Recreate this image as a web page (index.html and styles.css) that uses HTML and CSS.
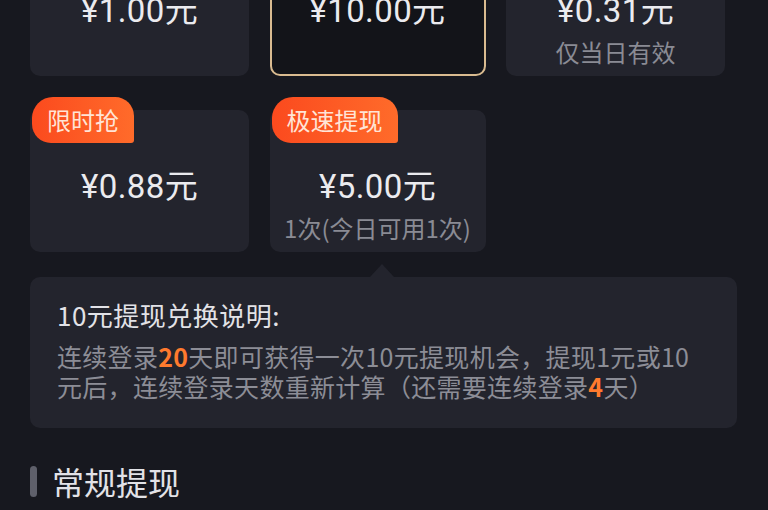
FILE: index.html
```html
<!DOCTYPE html>
<html lang="zh-CN">
<head>
<meta charset="utf-8">
<title>提现</title>
<link rel="stylesheet" href="styles.css">
</head>
<body>
<div class="page">
  <div class="grid">
    <div class="card">
      <div class="amount">¥1.00元</div>
    </div>
    <div class="card selected">
      <div class="amount">¥10.00元</div>
    </div>
    <div class="card">
      <div class="amount">¥0.31元</div>
      <div class="sub">仅当日有效</div>
    </div>
    <div class="card">
      <span class="badge">限时抢</span>
      <div class="amount">¥0.88元</div>
    </div>
    <div class="card">
      <span class="badge">极速提现</span>
      <div class="amount">¥5.00元</div>
      <div class="sub">1次(今日可用1次)</div>
    </div>
  </div>

  <div class="info">
    <span class="pointer"></span>
    <div class="info-title">10元提现兑换说明:</div>
    <p class="info-body">连续登录<b class="hl">20</b>天即可获得一次10元提现机会，提现1元或10元后，连续登录天数重新计算（还需要连续登录<b class="hl">4</b>天）</p>
  </div>

  <h2 class="section-title"><span class="bar"></span>常规提现</h2>
</div>
</body>
</html>
```

FILE: styles.css
```css
html, body {
  margin: 0;
  padding: 0;
  background: #17181f;
}
body {
  font-family: "Noto Sans CJK SC", "Noto Sans", sans-serif;
  color: #e6e6ea;
  overflow: hidden;
  height: 510px;
}
.page {
  padding: 0 31px 0 30px;
}
.grid {
  display: grid;
  grid-template-columns: 219px 216px 219px;
  column-gap: 20.5px;
  row-gap: 34px;
  margin-top: -66px;
}
.card {
  position: relative;
  height: 142px;
  box-sizing: border-box;
  background: #23242d;
  border-radius: 10px;
  padding-top: 57px;
  text-align: center;
}
.card.selected {
  background: #131419;
  border: 2px solid #d9bb90;
  padding-top: 55px;
}
.amount {
  font-family: Roboto, "Noto Sans CJK SC", sans-serif;
  font-size: 33px;
  line-height: 40px;
  color: #ebebef;
  letter-spacing: 0.4px;
}
.sub {
  margin-top: 6px;
  font-size: 24px;
  line-height: 30px;
  color: #8a8b94;
}
.badge {
  position: absolute;
  left: 2px;
  top: -13px;
  height: 46px;
  line-height: 46px;
  padding: 0 15px;
  font-size: 24px;
  color: #ffe4d6;
  background: linear-gradient(90deg, #fb4a1e 0%, #ff6b2a 100%);
  border-radius: 21px 19px 3px 19px;
}
.info {
  position: relative;
  margin-top: 25px;
  width: 707px;
  box-sizing: border-box;
  background: #23242d;
  border-radius: 10px;
  padding: 21px 27px 27px 27px;
}
.pointer {
  position: absolute;
  left: 340px;
  top: -13px;
  width: 0;
  height: 0;
  border-left: 12px solid transparent;
  border-right: 12px solid transparent;
  border-bottom: 13px solid #23242d;
}
.info-title {
  font-size: 26px;
  line-height: 34px;
  letter-spacing: 0.5px;
  color: #e2e2e7;
}
.info-body {
  margin: 9px 0 0 0;
  font-size: 25px;
  letter-spacing: 0.3px;
  line-height: 30px;
  color: #8c8d96;
}
.hl {
  color: #ff7a2e;
  font-weight: 700;
}
.section-title {
  display: flex;
  align-items: center;
  margin: 33px 0 0 0;
  font-size: 32px;
  line-height: 40px;
  font-weight: 400;
  color: #e2e2e7;
}
.bar {
  width: 7px;
  height: 31px;
  border-radius: 4px;
  background: #5f606b;
  margin-right: 15px;
}
```
